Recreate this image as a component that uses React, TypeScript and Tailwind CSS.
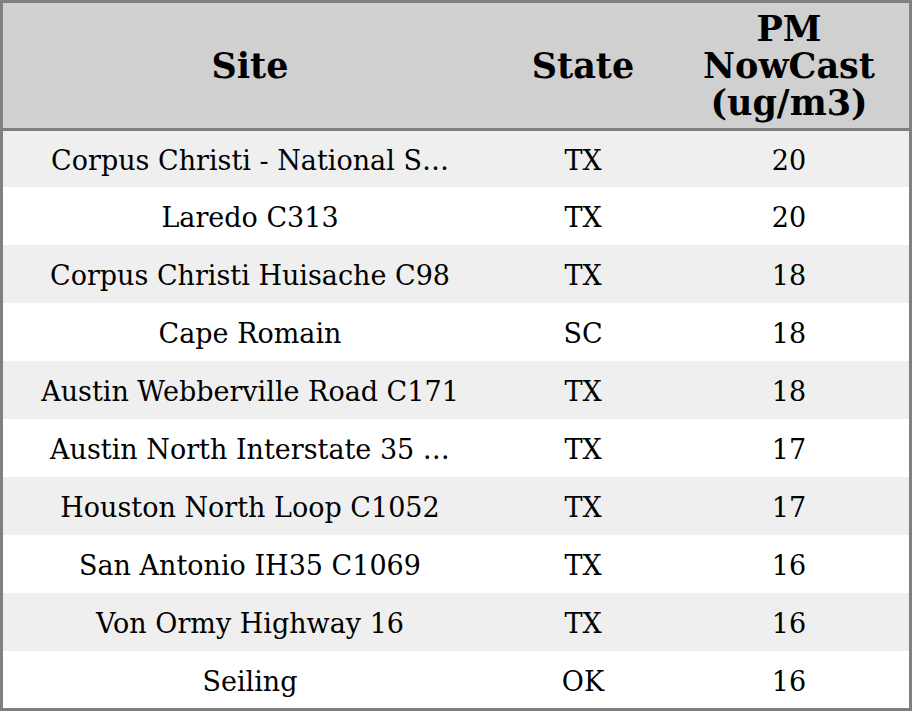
import React from "react";

const rows: [string, string, string][] = [
  ["Corpus Christi - National S\u2026", "TX", "20"],
  ["Laredo C313", "TX", "20"],
  ["Corpus Christi Huisache C98", "TX", "18"],
  ["Cape Romain", "SC", "18"],
  ["Austin Webberville Road C171", "TX", "18"],
  ["Austin North Interstate 35 \u2026", "TX", "17"],
  ["Houston North Loop C1052", "TX", "17"],
  ["San Antonio IH35 C1069", "TX", "16"],
  ["Von Ormy Highway 16", "TX", "16"],
  ["Seiling", "OK", "16"],
];

export default function App() {
  return (
    <div
      className="w-[912px] h-[711px] border-[3px] border-[#808080] bg-white flex flex-col text-black"
      style={{ fontFamily: '"DejaVu Serif", serif' }}
    >
      <div className="h-[128px] shrink-0 flex bg-[#d0d0d0] border-b-[3px] border-[#808080] font-bold text-[35px] leading-[37px]">
        <div className="w-[494px] flex items-center justify-center text-center">Site</div>
        <div className="w-[172px] flex items-center justify-center text-center">State</div>
        <div className="flex-1 flex items-center justify-center text-center">
          PM
          <br />
          NowCast
          <br />
          (ug/m3)
        </div>
      </div>
      {rows.map((r, i) => (
        <div
          key={i}
          className={`flex shrink-0 text-[27px] pt-[5px] ${i % 2 === 0 ? "bg-[#efefef]" : "bg-white"} ${
            i === 0 ? "h-[56px]" : i === 9 ? "h-[57px]" : "h-[58px]"
          }`}
        >
          <div className="w-[494px] flex items-center justify-center whitespace-nowrap">{r[0]}</div>
          <div className="w-[172px] flex items-center justify-center">{r[1]}</div>
          <div className="flex-1 flex items-center justify-center">{r[2]}</div>
        </div>
      ))}
    </div>
  );
}
